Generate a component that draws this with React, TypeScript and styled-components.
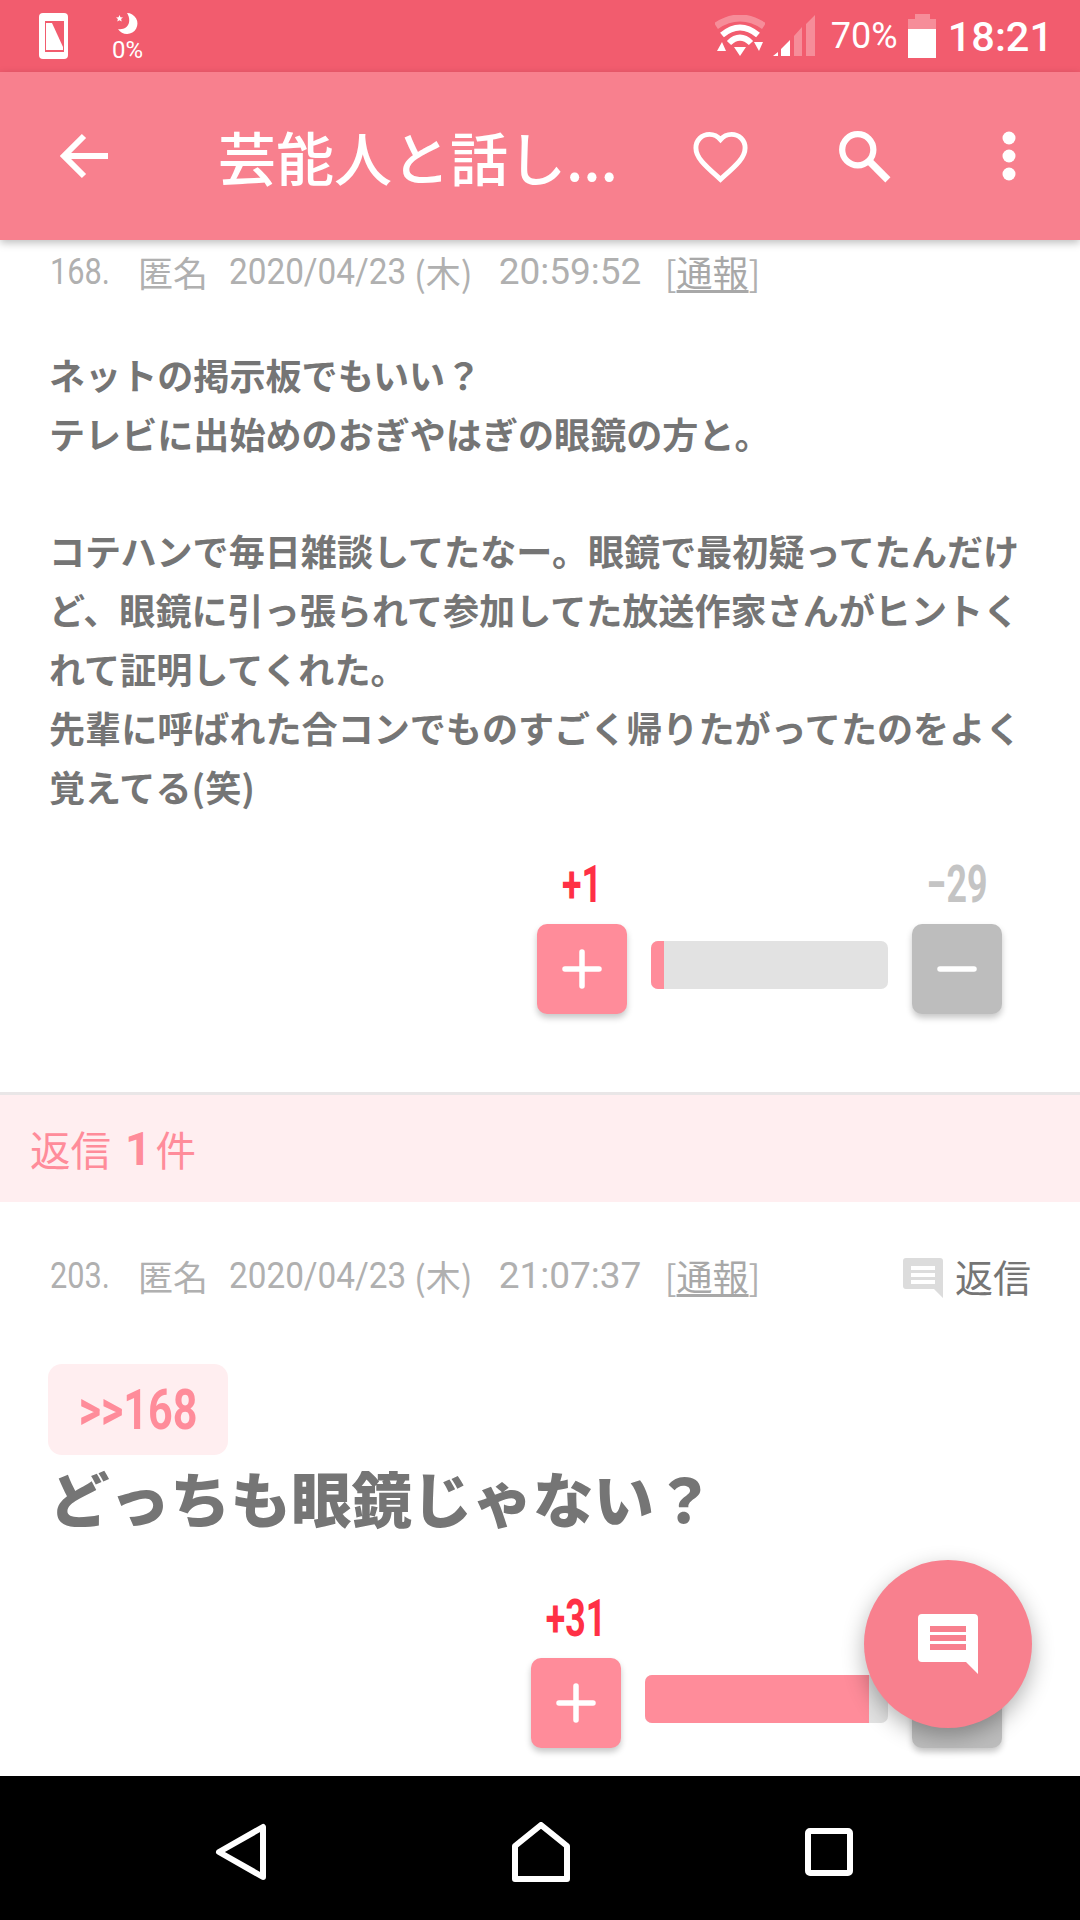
import { ReactElement, ReactNode } from 'react';
import styled, { createGlobalStyle } from 'styled-components';

const Colors = {
    statusBar: '#f25c6e',
    appBar: '#f8808e',
    pink: '#ff8c9a',
    paleRed: '#ffeef0',
    red: '#ff3045',
    gray: '#757575',
    metaGray: '#b0b0b0',
    minus: '#bdbdbd',
    track: '#e2e2e2',
};

const LATIN = '"Roboto", "Noto Sans CJK JP", sans-serif';
const GOTHIC = '"Noto Sans CJK JP", sans-serif';

const GlobalStyle = createGlobalStyle`
    html, body {
        margin: 0;
        padding: 0;
        background: #fff;
    }
`;

const Phone = styled.div`
    position: relative;
    width: 1080px;
    height: 1920px;
    display: flex;
    flex-direction: column;
    overflow: hidden;
    font-family: ${GOTHIC};
    background: #fff;
`;

const StatusBar = styled.div`
    height: 72px;
    flex: none;
    display: flex;
    align-items: center;
    padding: 0 27px 0 39px;
    box-sizing: border-box;
    background: ${Colors.statusBar};
    color: #fff;
`;

const StatusLeft = styled.div`
    display: flex;
    align-items: center;
    gap: 44px;
    flex: 1;
`;

const NightMode = styled.div`
    display: flex;
    flex-direction: column;
    align-items: center;
    gap: 6px;
    font-family: ${LATIN};
    font-size: 24px;
    line-height: 20px;
`;

const StatusRight = styled.div`
    display: flex;
    align-items: center;
`;

const StatusIcon = styled.svg<{ $left?: number }>`
    display: block;
    flex: none;
    margin-left: ${({ $left }) => $left ?? 0}px;
`;

const StatusPercent = styled.span`
    font-family: ${LATIN};
    font-size: 36px;
    margin-left: 16px;
`;

const StatusClock = styled.span`
    font-family: ${LATIN};
    font-weight: 500;
    font-size: 41.5px;
    margin-left: 12px;
`;

const AppBar = styled.div`
    position: relative;
    z-index: 2;
    height: 168px;
    flex: none;
    display: flex;
    align-items: center;
    background: ${Colors.appBar};
    box-shadow: 0 3px 8px rgba(0, 0, 0, 0.25);
    color: #fff;
`;

const AppIcon = styled.svg<{ $left: number }>`
    flex: none;
    margin-left: ${({ $left }) => $left}px;
`;

const AppTitle = styled.div`
    width: 415px;
    margin-left: 108px;
    font-size: 58px;
    font-weight: 500;
    line-height: 70px;
    white-space: nowrap;
`;

const Content = styled.div`
    flex: 1;
    min-height: 0;
    overflow: hidden;
`;

const MetaRow = styled.div<{ $top: number }>`
    display: flex;
    align-items: center;
    height: 44px;
    padding-left: 50px;
    padding-right: 49px;
    margin-top: ${({ $top }) => $top}px;
    color: ${Colors.metaGray};
    font-size: 35px;
    white-space: nowrap;
`;

// condensed digits: the box keeps the squeezed width so the row still flows
const MetaNum = styled.span<{ $gap?: number; $width: number; $scale: number }>`
    display: inline-block;
    flex: none;
    width: ${({ $width }) => $width}px;
    margin-left: ${({ $gap }) => $gap ?? 0}px;
    font-family: ${LATIN};
    font-size: 37px;
    transform: scaleX(${({ $scale }) => $scale});
    transform-origin: left center;
`;

const MetaWord = styled.span<{ $gap?: number }>`
    margin-left: ${({ $gap }) => $gap ?? 0}px;
`;

const MetaLink = styled.span`
    font-size: 36px;
    color: #a8a8a8;
    text-decoration: underline;
    text-underline-offset: 3px;
`;

const ReplyLink = styled.div`
    margin-left: auto;
    display: flex;
    align-items: center;
    gap: 12px;
    font-size: 38px;
    color: ${Colors.gray};
`;

const ReplyIcon = styled.svg`
    flex: none;
    margin-top: 5px;
`;

const Body = styled.div`
    margin: 52px 40px 0 49px;
    font-size: 36.1px;
    font-weight: 700;
    line-height: 58.8px;
    color: ${Colors.gray};
`;

const VoteRow = styled.div<{ $top: number }>`
    display: flex;
    justify-content: flex-end;
    align-items: flex-end;
    height: 150px;
    margin-top: ${({ $top }) => $top}px;
    padding-right: 78px;
`;

const VoteColumn = styled.div`
    position: relative;
    width: 90px;
    height: 90px;
`;

const VoteCount = styled.div<{ $plus?: boolean }>`
    position: absolute;
    bottom: 100%;
    left: -30px;
    right: -30px;
    margin-bottom: 14px;
    text-align: center;
    font-family: ${LATIN};
    font-weight: 700;
    font-size: 51px;
    line-height: 51px;
    transform: scaleX(0.7);
    color: ${({ $plus }) => ($plus ? Colors.red : '#c4c4c4')};
`;

const VoteButton = styled.div<{ $plus?: boolean }>`
    width: 90px;
    height: 90px;
    border-radius: 10px;
    display: flex;
    align-items: center;
    justify-content: center;
    background: ${({ $plus }) => ($plus ? Colors.pink : Colors.minus)};
    box-shadow: 0 4px 6px rgba(0, 0, 0, 0.22);
`;

const Track = styled.div<{ $width: number }>`
    width: ${({ $width }) => $width}px;
    height: 48px;
    margin: 0 24px 25px;
    border-radius: 7px;
    overflow: hidden;
    background: ${Colors.track};
`;

const TrackFill = styled.div`
    height: 100%;
    background: ${Colors.pink};
`;

const ReplyBand = styled.div`
    height: 107px;
    margin-top: 78px;
    display: flex;
    align-items: center;
    padding-left: 30px;
    border-top: 3px solid #e9e6e7;
    background: ${Colors.paleRed};
    color: ${Colors.pink};
    font-size: 40.5px;
`;

const ReplyCount = styled.span`
    font-family: ${LATIN};
    font-weight: 700;
    font-size: 46px;
    margin: 0 4px 0 14px;
`;

const QuoteChip = styled.div`
    display: flex;
    align-items: center;
    justify-content: center;
    width: 180px;
    height: 91px;
    margin: 67px 0 0 48px;
    border-radius: 14px;
    background: ${Colors.paleRed};
    color: ${Colors.pink};
    font-family: ${LATIN};
    font-weight: 700;
    font-size: 56px;
`;

const QuoteText = styled.span`
    display: inline-block;
    transform: scaleX(0.77);
`;

const BigLine = styled.div`
    margin: 2px 0 0 49px;
    font-size: 60.5px;
    font-weight: 900;
    line-height: 80px;
    color: ${Colors.gray};
`;

const Fab = styled.div`
    position: absolute;
    left: 864px;
    top: 1560px;
    z-index: 3;
    width: 168px;
    height: 168px;
    border-radius: 50%;
    display: flex;
    align-items: center;
    justify-content: center;
    background: ${Colors.appBar};
    box-shadow: 0 8px 22px rgba(0, 0, 0, 0.3);
`;

const NavBar = styled.div`
    position: relative;
    z-index: 4;
    height: 144px;
    flex: none;
    display: flex;
    align-items: center;
    justify-content: center;
    padding: 8px 12px 0 0;
    box-sizing: border-box;
    background: #000;
`;

const NavIcon = styled.svg<{ $left?: number }>`
    flex: none;
    margin-left: ${({ $left }) => $left ?? 0}px;
`;

const Vote = ({
    plus,
    minus,
    percent,
    width,
    top,
}: {
    plus: string;
    minus: string;
    percent: number;
    width: number;
    top: number;
}): ReactElement => (
    <VoteRow $top={top}>
        <VoteColumn>
            <VoteCount $plus>{plus}</VoteCount>
            <VoteButton $plus>
                <svg width='40' height='40' viewBox='0 0 40 40'>
                    <path d='M20 3v34M3 20h34' stroke='#fff' strokeWidth='5.5' strokeLinecap='round' />
                </svg>
            </VoteButton>
        </VoteColumn>
        <Track $width={width}>
            <TrackFill style={{ width: `${percent}%` }} />
        </Track>
        <VoteColumn>
            <VoteCount>{minus}</VoteCount>
            <VoteButton>
                <svg width='40' height='40' viewBox='0 0 40 40'>
                    <path d='M3 20h34' stroke='#fff' strokeWidth='5.5' strokeLinecap='round' />
                </svg>
            </VoteButton>
        </VoteColumn>
    </VoteRow>
);

const Meta = ({
    no,
    time,
    top,
    children,
}: {
    no: string;
    time: string;
    top: number;
    children?: ReactNode;
}): ReactElement => (
    <MetaRow $top={top}>
        <MetaNum $width={60} $scale={0.83}>{no}</MetaNum>
        <MetaWord $gap={28}>匿名</MetaWord>
        <MetaNum $gap={21} $width={177} $scale={0.9}>2020/04/23</MetaNum>
        <MetaWord $gap={8}>(木)</MetaWord>
        <MetaNum $gap={26} $width={141} $scale={1}>{time}</MetaNum>
        <MetaWord $gap={25}>[</MetaWord>
        <MetaLink>通報</MetaLink>
        <MetaWord>]</MetaWord>
        {children}
    </MetaRow>
);

export default function App(): ReactElement {
    return (
        <Phone>
            <GlobalStyle />
            <StatusBar>
                <StatusLeft>
                    <StatusIcon width='29' height='46' viewBox='0 0 29 46'>
                        <rect width='29' height='46' rx='4' fill='#fff' />
                        <rect x='6' y='8' width='19' height='31' fill={Colors.statusBar} />
                        <path d='M7 10h6l11 24v3H7z' fill='#fff' />
                    </StatusIcon>
                    <NightMode>
                        <StatusIcon width='23' height='21' viewBox='0 0 23 21'>
                            <path d='M11 0a10.5 10.5 0 1 1-9 16c5 1 10-1.5 11-6.500C13.600 6 13 3 11 0z' fill='#fff' />
                            <path d='M3.5 2l1 2.3 2.500.2-1.900 1.600.6 2.400-2.200-1.300-2.200 1.300.6-2.400L0 4.500l2.500-.2z' fill='#fff' />
                        </StatusIcon>
                        0%
                    </NightMode>
                </StatusLeft>
                <StatusRight>
                    <StatusIcon width='50' height='42' viewBox='0 0 50 42'>
                        <path d='M1 11Q25-5 49 11' fill='none' stroke='#fff' strokeWidth='7' opacity='0.3' />
                        <path d='M7 20Q25 5 43 20' fill='none' stroke='#fff' strokeWidth='6' />
                        <path d='M14 28Q25 17 36 28' fill='none' stroke='#fff' strokeWidth='6' />
                        <path d='M19 32h12l-6 9zM2 36h9l-4-9zM39 27h9l-4 9z' fill='#fff' />
                    </StatusIcon>
                    <StatusIcon $left={8} width='42' height='42' viewBox='0 0 42 42'>
                        <path d='M0 41l5-4v4zM8 41v-7l9-9v16z' fill='#fff' />
                        <path d='M21 41V21l8-9v29zM33 41V9l9-9v41z' fill='#fff' opacity='0.3' />
                    </StatusIcon>
                    <StatusPercent>70%</StatusPercent>
                    <StatusIcon $left={10} width='28' height='44' viewBox='0 0 28 44'>
                        <path d='M7 0h15v5h6v10H0V5h7z' fill='#fff' opacity='0.3' />
                        <path d='M0 15h28v29H0z' fill='#fff' />
                    </StatusIcon>
                    <StatusClock>18:21</StatusClock>
                </StatusRight>
            </StatusBar>
            <AppBar>
                <AppIcon $left={60} width='50' height='46' viewBox='0 0 50 46'>
                    <path d='M48 23H5M24 3L4 23l20 20' fill='none' stroke='#fff' strokeWidth='6' />
                </AppIcon>
                <AppTitle>芸能人と話し...</AppTitle>
                <AppIcon $left={58} width='59' height='55' viewBox='0 0 24 22'>
                    <path d='M12 20.3l-1.300-1.200C5.400 14.400 2 11.300 2 7.500 2 4.400 4.400 2 7.500 2c1.700 0 3.400.8 4.500 2.100C13.100 2.800 14.800 2 16.500 2 19.600 2 22 4.400 22 7.500c0 3.800-3.400 6.900-8.700 11.600z' fill='none' stroke='#fff' strokeWidth='2' />
                </AppIcon>
                <AppIcon $left={87} width='54' height='54' viewBox='0 0 52 52'>
                    <circle cx='20' cy='20' r='15' fill='none' stroke='#fff' strokeWidth='6' />
                    <path d='M31 31l18 18' stroke='#fff' strokeWidth='7' />
                </AppIcon>
                <AppIcon $left={111} width='14' height='50' viewBox='0 0 14 50'>
                    <circle cx='7' cy='7' r='6.5' fill='#fff' />
                    <circle cx='7' cy='25' r='6.5' fill='#fff' />
                    <circle cx='7' cy='43' r='6.5' fill='#fff' />
                </AppIcon>
            </AppBar>
            <Content>
                <Meta no='168.' time='20:59:52' top={9} />
                <Body>
                    ネットの掲示板でもいい？
                    <br />
                    テレビに出始めのおぎやはぎの眼鏡の方と。
                    <br />
                    <br />
                    コテハンで毎日雑談してたなー。眼鏡で最初疑ってたんだけど、眼鏡に引っ張られて参加してた放送作家さんがヒントくれて証明してくれた。
                    <br />
                    先輩に呼ばれた合コンでものすごく帰りたがってたのをよく覚えてる(笑)
                </Body>
                <Vote plus='+1' minus='−29' percent={5.5} width={237} top={49} />
                <ReplyBand>
                    返信<ReplyCount>1</ReplyCount>件
                </ReplyBand>
                <Meta no='203.' time='21:07:37' top={51}>
                    <ReplyLink>
                        <ReplyIcon width='40' height='40' viewBox='0 0 40 40'>
                            <path d='M3 0h34a3 3 0 0 1 3 3v37l-9-9H3a3 3 0 0 1-3-3V3a3 3 0 0 1 3-3z' fill='#dcdcdc' />
                            <path d='M8 8h24v4H8zM8 15h24v4H8zM8 22h24v4H8z' fill='#fff' />
                        </ReplyIcon>
                        返信
                    </ReplyLink>
                </Meta>
                <QuoteChip>
                    <QuoteText>&gt;&gt;168</QuoteText>
                </QuoteChip>
                <BigLine>どっちも眼鏡じゃない？</BigLine>
                <Vote plus='+31' minus='' percent={92} width={243} top={61} />
            </Content>
            <Fab>
                <svg width='60' height='60' viewBox='0 0 60 60'>
                    <path d='M4 0h52a4 4 0 0 1 4 4v56L48 48H4a4 4 0 0 1-4-4V4a4 4 0 0 1 4-4z' fill='#fff' />
                    <path d='M12 12h36v6H12zM12 21h36v6H12zM12 30h36v6H12z' fill={Colors.appBar} />
                </svg>
            </Fab>
            <NavBar>
                <NavIcon width='52' height='58' viewBox='0 0 52 58'>
                    <path d='M48 4v50L4 29z' fill='none' stroke='#fff' strokeWidth='6' strokeLinejoin='round' />
                </NavIcon>
                <NavIcon $left={245} width='58' height='60' viewBox='0 0 58 60'>
                    <path d='M3 57V24L29 3l26 21v33z' fill='none' stroke='#fff' strokeWidth='6' strokeLinejoin='round' />
                </NavIcon>
                <NavIcon $left={235} width='48' height='48' viewBox='0 0 48 48'>
                    <rect x='3' y='3' width='42' height='42' rx='2' fill='none' stroke='#fff' strokeWidth='6' />
                </NavIcon>
            </NavBar>
        </Phone>
    );
}
